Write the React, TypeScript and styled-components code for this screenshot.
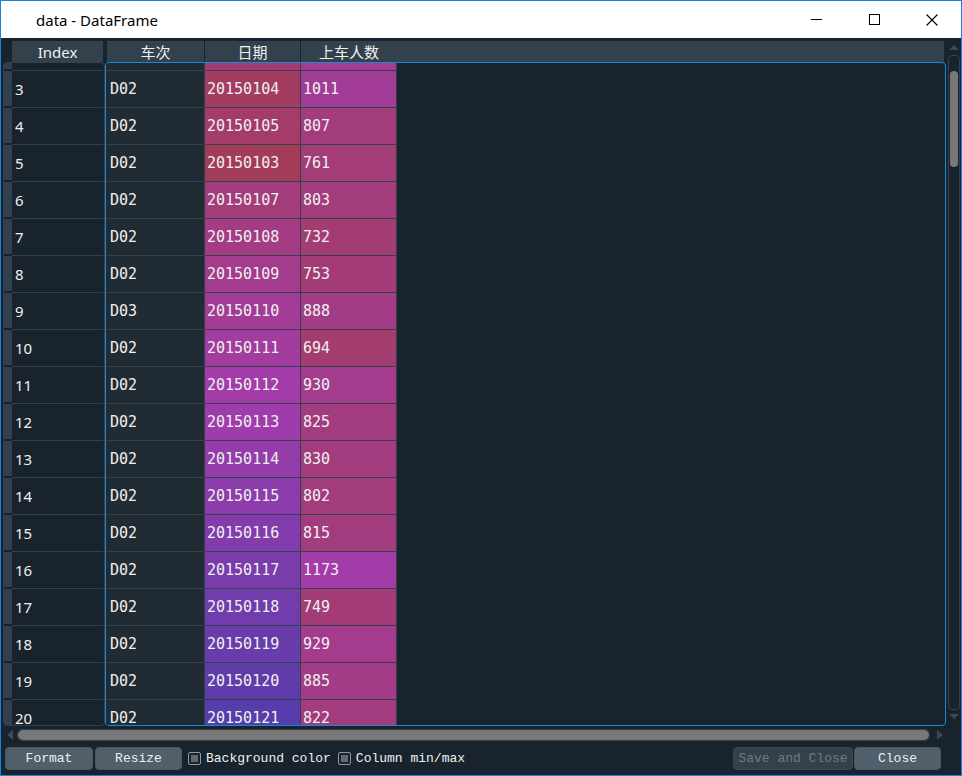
import React from 'react';
import styled, { createGlobalStyle } from 'styled-components';

const GlobalStyle = createGlobalStyle`
  html, body {
    margin: 0;
    padding: 0;
    background: #19232d;
  }
  * {
    box-sizing: border-box;
  }
`;

type Row = { idx: number; train: string; date: number; count: number; hidden?: boolean };

// row 2 only peeks out above row 3, its text is scrolled out of sight
const rows: Row[] = [
  { idx: 2, train: 'D02', date: 20150106, count: 980, hidden: true },
  { idx: 3, train: 'D02', date: 20150104, count: 1011 },
  { idx: 4, train: 'D02', date: 20150105, count: 807 },
  { idx: 5, train: 'D02', date: 20150103, count: 761 },
  { idx: 6, train: 'D02', date: 20150107, count: 803 },
  { idx: 7, train: 'D02', date: 20150108, count: 732 },
  { idx: 8, train: 'D02', date: 20150109, count: 753 },
  { idx: 9, train: 'D03', date: 20150110, count: 888 },
  { idx: 10, train: 'D02', date: 20150111, count: 694 },
  { idx: 11, train: 'D02', date: 20150112, count: 930 },
  { idx: 12, train: 'D02', date: 20150113, count: 825 },
  { idx: 13, train: 'D02', date: 20150114, count: 830 },
  { idx: 14, train: 'D02', date: 20150115, count: 802 },
  { idx: 15, train: 'D02', date: 20150116, count: 815 },
  { idx: 16, train: 'D02', date: 20150117, count: 1173 },
  { idx: 17, train: 'D02', date: 20150118, count: 749 },
  { idx: 18, train: 'D02', date: 20150119, count: 929 },
  { idx: 19, train: 'D02', date: 20150120, count: 885 },
  { idx: 20, train: 'D02', date: 20150121, count: 822 },
];

// same idea as spyder's dataframe editor: hue from value, alpha over the dark base
function hsvToRgb(h: number, s: number, v: number): number[] {
  const i = Math.floor(h * 6);
  const f = h * 6 - i;
  const p = v * (1 - s);
  const q = v * (1 - f * s);
  const t = v * (1 - (1 - f) * s);
  const m = [
    [v, t, p],
    [q, v, p],
    [p, v, t],
    [p, q, v],
    [t, p, v],
    [v, p, q],
  ][((i % 6) + 6) % 6];
  return m.map((x) => x * 255);
}

const BASE = [25, 35, 45];

function heatColor(value: number, min: number, max: number): string {
  const hue = (0.66 + (0.33 * (max - value)) / (max - min)) % 1;
  const rgb = hsvToRgb(hue, 0.7, 1);
  const out = rgb.map((c, i) => Math.round(c * 0.6 + BASE[i] * 0.4));
  return `rgb(${out[0]}, ${out[1]}, ${out[2]})`;
}

const Window = styled.div`
  width: 962px;
  height: 776px;
  border: 1px solid #1883d7;
  background: #19232d;
  display: flex;
  flex-direction: column;
  overflow: hidden;
`;

const TitleBar = styled.div`
  height: 37px;
  flex: none;
  background: #ffffff;
  display: flex;
  align-items: stretch;
`;

const Title = styled.div`
  flex: 1;
  display: flex;
  align-items: center;
  padding-left: 35px;
  font: 15px 'Noto Sans', 'Liberation Sans', sans-serif;
  color: #000;
`;

const CaptionButton = styled.div`
  width: 58px;
  display: flex;
  align-items: center;
  justify-content: center;
`;

const Body = styled.div`
  flex: 1;
  display: flex;
  flex-direction: column;
  padding: 3px 0 0 2px;
`;

const TableGrid = styled.div`
  display: grid;
  grid-template-columns: 102px 841px 15px;
  grid-template-rows: 21px 664px;
`;

const IndexHeader = styled.div`
  display: flex;
  padding-left: 9px;
`;

const ColumnHeader = styled.div`
  display: flex;
  margin: 0 2px;
  background: #32414b;
`;

const HeaderCell = styled.div<{ $w: number; $divider?: boolean }>`
  width: ${(p) => p.$w}px;
  flex: none;
  background: #32414b;
  border-right: ${(p) => (p.$divider ? '1px solid #19232d' : 'none')};
  display: flex;
  align-items: center;
  justify-content: center;
  font: 15px 'Noto Sans', 'Noto Sans CJK SC', sans-serif;
  color: #eff0f1;
`;

const IndexFrame = styled.div`
  border: 1px solid #32414b;
  border-radius: 4px;
  overflow: hidden;
`;

const DataFrame = styled.div`
  border: 1px solid #148cd2;
  border-radius: 4px;
  overflow: hidden;
`;

const Rows = styled.div`
  margin-top: -29px;
  display: flex;
  flex-direction: column;
`;

const TableRow = styled.div`
  display: flex;
  height: 37px;
  flex: none;
`;

const RowHead = styled.div`
  width: 8px;
  background: #32414b;
  border-bottom: 2px solid #19232d;
`;

const IndexCell = styled.div`
  width: 91px;
  border-bottom: 1px solid #32414b;
  padding-left: 3px;
  display: flex;
  align-items: center;
  font: 15px 'Noto Sans', sans-serif;
  color: #f0f0f0;
`;

const Cell = styled.div<{ $w: number; $pad: number }>`
  width: ${(p) => p.$w}px;
  flex: none;
  border-right: 1px solid #32414b;
  border-bottom: 1px solid #32414b;
  padding-left: ${(p) => p.$pad}px;
  display: flex;
  align-items: center;
  font: 15px 'DejaVu Sans Mono', monospace;
  color: #f0f0f0;
  white-space: nowrap;
`;

const VScroll = styled.div`
  grid-column: 3;
  grid-row: 1 / span 2;
  display: flex;
  flex-direction: column;
  align-items: center;
  padding: 4px 0 7px;
`;

const VGroove = styled.div`
  flex: 1;
  width: 12px;
  margin: 5px 0 4px;
  border: 1px solid #32414b;
  border-radius: 4px;
  display: flex;
  flex-direction: column;
  align-items: center;
  padding-top: 15px;
`;

const VHandle = styled.div`
  width: 8px;
  height: 96px;
  border-radius: 4px;
  background: #787878;
`;

const HScroll = styled.div`
  margin-top: 2px;
  height: 14px;
  display: flex;
  align-items: center;
  padding-left: 4px;
`;

const HGroove = styled.div`
  width: 913px;
  height: 12px;
  margin: 0 7px 0 4px;
  border: 1px solid #32414b;
  border-radius: 5px;
  display: flex;
`;

const HHandle = styled.div`
  flex: 1;
  border-radius: 5px;
  background: #787878;
`;

const ButtonRow = styled.div`
  margin-top: 5px;
  height: 23px;
  display: flex;
  align-items: center;
  padding: 0 20px 0 2px;
  font: 13px 'Liberation Mono', 'DejaVu Sans Mono', monospace;
  color: #f0f0f0;
`;

const Button = styled.div<{ $w: number; $disabled?: boolean }>`
  width: ${(p) => p.$w}px;
  height: 23px;
  flex: none;
  border-radius: 4px;
  background: ${(p) => (p.$disabled ? '#32414b' : '#505f69')};
  border: 1px solid ${(p) => (p.$disabled ? '#3a4853' : '#4a5862')};
  color: ${(p) => (p.$disabled ? '#787878' : '#f0f0f0')};
  display: flex;
  align-items: center;
  justify-content: center;
  white-space: nowrap;
  overflow: hidden;
`;

const Check = styled.div<{ $gap: number }>`
  width: 13px;
  height: 13px;
  flex: none;
  margin-left: ${(p) => p.$gap}px;
  border: 1px solid #8f989e;
  border-radius: 2px;
  background: #19232d;
  padding: 2px;
  &::after {
    content: '';
    display: block;
    width: 100%;
    height: 100%;
    background: #5f6a72;
  }
`;

const CheckLabel = styled.span<{ $gap: number }>`
  margin-left: ${(p) => p.$gap}px;
  white-space: nowrap;
`;

const Spacer = styled.div`
  flex: 1;
`;

const ARROW = '#3b4954';

const Arrow: React.FC<{ dir: 'up' | 'down' | 'left' | 'right' }> = ({ dir }) => {
  const vertical = dir === 'up' || dir === 'down';
  const w = vertical ? 10 : 6;
  const h = vertical ? 5 : 10;
  const pts = {
    up: '0,5 5,0 10,5',
    down: '0,0 10,0 5,5',
    left: '6,0 6,10 0,5',
    right: '0,0 6,5 0,10',
  }[dir];
  return (
    <svg width={w} height={h} viewBox={`0 0 ${w} ${h}`}>
      <polygon points={pts} fill={ARROW} />
    </svg>
  );
};

const minDate = 20150101;
const maxDate = 20150125;
const minCount = 362;
const maxCount = 2099;

export default function App() {
  return (
    <>
      <GlobalStyle />
      <Window>
        <TitleBar>
          <Title>data - DataFrame</Title>
          <CaptionButton>
            <svg width="11" height="11" viewBox="0 0 11 11">
              <line x1="0" y1="5.5" x2="11" y2="5.5" stroke="#000" strokeWidth="1" />
            </svg>
          </CaptionButton>
          <CaptionButton>
            <svg width="11" height="11" viewBox="0 0 11 11">
              <rect x="0.5" y="0.5" width="10" height="10" fill="none" stroke="#000" strokeWidth="1" />
            </svg>
          </CaptionButton>
          <CaptionButton>
            <svg width="12" height="12" viewBox="0 0 12 12">
              <path d="M0.5 0.5 L11.5 11.5 M11.5 0.5 L0.5 11.5" stroke="#000" strokeWidth="1.1" />
            </svg>
          </CaptionButton>
        </TitleBar>

        <Body>
          <TableGrid>
            <IndexHeader>
              <HeaderCell $w={91}>Index</HeaderCell>
            </IndexHeader>
            <ColumnHeader>
              <HeaderCell $w={98} $divider>车次</HeaderCell>
              <HeaderCell $w={96} $divider>日期</HeaderCell>
              <HeaderCell $w={96}>上车人数</HeaderCell>
            </ColumnHeader>
            <VScroll>
              <Arrow dir="up" />
              <VGroove>
                <VHandle />
              </VGroove>
              <Arrow dir="down" />
            </VScroll>

            <IndexFrame>
              <Rows>
                {rows.map((r) => (
                  <TableRow key={r.idx}>
                    <RowHead />
                    <IndexCell>{r.hidden ? null : r.idx}</IndexCell>
                  </TableRow>
                ))}
              </Rows>
            </IndexFrame>
            <DataFrame>
              <Rows>
                {rows.map((r) => (
                  <TableRow key={r.idx}>
                    <Cell $w={99} $pad={4} style={{ background: '#212b34' }}>
                      {r.hidden ? null : r.train}
                    </Cell>
                    <Cell $w={96} $pad={2} style={{ background: heatColor(r.date, minDate, maxDate) }}>
                      {r.hidden ? null : r.date}
                    </Cell>
                    <Cell $w={96} $pad={2} style={{ background: heatColor(r.count, minCount, maxCount) }}>
                      {r.hidden ? null : r.count}
                    </Cell>
                  </TableRow>
                ))}
              </Rows>
            </DataFrame>
          </TableGrid>

          <HScroll>
            <Arrow dir="left" />
            <HGroove>
              <HHandle />
            </HGroove>
            <Arrow dir="right" />
          </HScroll>

          <ButtonRow>
            <Button $w={88}>Format</Button>
            <Button $w={87} style={{ marginLeft: 2 }}>Resize</Button>
            <Check $gap={6} />
            <CheckLabel $gap={5}>Background color</CheckLabel>
            <Check $gap={7} />
            <CheckLabel $gap={5}>Column min/max</CheckLabel>
            <Spacer />
            <Button $w={120} $disabled>Save and Close</Button>
            <Button $w={87} style={{ marginLeft: 1 }}>Close</Button>
          </ButtonRow>
        </Body>
      </Window>
    </>
  );
}
